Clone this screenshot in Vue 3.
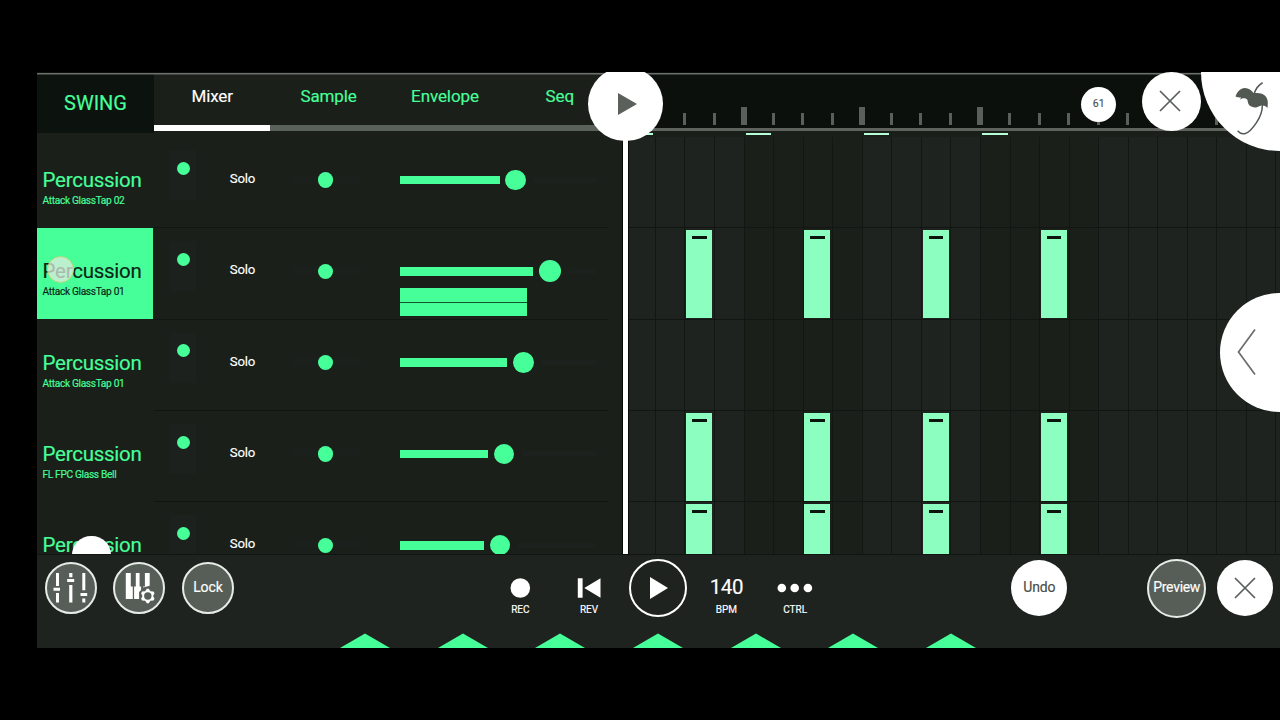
<script setup>
const tabs = ["Mixer", "Sample", "Envelope", "Seq"];

const tracks = [
  { name: "Percussion", sample: "Attack GlassTap 02", level: 100, knob: 20.6, hits: false },
  { name: "Percussion", sample: "Attack GlassTap 01", level: 133.6, knob: 22, hits: true, selected: true },
  { name: "Percussion", sample: "Attack GlassTap 01", level: 107.6, knob: 20.8, hits: false },
  { name: "Percussion", sample: "FL FPC Glass Bell", level: 88.8, knob: 20, hits: true },
  { name: "Percussion", sample: "", level: 84.6, knob: 20, hits: true },
];

const steps = Array.from({ length: 23 }, (_, i) => i);

function isDark(i) {
  return (i >= 4 && i < 8) || (i >= 12 && i < 16);
}

function hasNote(track, i) {
  return track.hits && i % 4 === 2 && i < 16;
}
</script>

<template>
  <div class="stage">
    <div class="screen">
      <header class="top">
        <div class="swing">SWING</div>
        <nav class="tabs">
          <div v-for="(tab, i) in tabs" :key="tab" class="tab" :class="{ active: i === 0 }">{{ tab }}</div>
        </nav>
        <div class="ruler">
          <div v-for="i in steps" :key="i" class="tick">
            <span v-if="i > 1" :class="{ major: i % 4 === 0 && i < 16 }"></span>
          </div>
        </div>
      </header>

      <main class="tracks">
        <div class="marks">
          <div v-for="i in steps" :key="i" class="mark" :class="{ on: i % 4 === 0 && i < 16 }"></div>
        </div>
        <section v-for="(track, t) in tracks" :key="t" class="track">
          <div class="name" :class="{ selected: track.selected }">
            <h2>{{ track.name }}</h2>
            <p v-if="track.sample">{{ track.sample }}</p>
          </div>
          <div class="controls">
            <div class="mute"><i></i></div>
            <div class="solo">Solo</div>
            <div class="pan"><i></i></div>
            <div class="volume">
              <div class="slider">
                <div class="bar" :style="{ width: track.level + 'px' }"></div>
                <div class="knob" :style="{ width: track.knob + 'px', height: track.knob + 'px' }"></div>
                <div class="rest"></div>
              </div>
              <div v-if="track.selected" class="meter">
                <div></div>
                <div></div>
              </div>
            </div>
          </div>
          <div class="pattern">
            <div v-for="i in steps" :key="i" class="step" :class="{ dark: isDark(i) }">
              <div v-if="hasNote(track, i)" class="note"><b></b></div>
            </div>
          </div>
        </section>
        <div class="handle"></div>
      </main>

      <footer class="bottom">
        <div class="tools">
          <div class="slot">
            <div class="round grey">
              <svg width="52" height="52" viewBox="0 0 52 52" fill="#fff">
                <path d="M11 11h3v13h-3zM8.500 25.700h6.500v3H8.500zM11 31h3v9.500h-3zM24.200 11h3.200v4.300h-3.200zM22.200 17h7v3h-7zM24.200 23h3.200v17.500h-3.200zM37.300 11h3v17.300h-3zM35.500 31h6.700v3h-6.700zM37.300 36.500h3v4h-3z" />
              </svg>
            </div>
          </div>
          <div class="slot">
            <div class="round grey">
              <svg width="52" height="52" viewBox="0 0 52 52" fill="#fff">
                <path d="M12.800 11h5v13.500h2V37h-7zM22.800 11h3.800v13.500h1.500v3.400l-2 2V37h-5V24.500h1.700zM31.900 11h4.800v12.800l-6.600 1.700v-1h1.800z" />
                <g transform="translate(34.800 34)">
                  <path d="M-1-7.200h2L2.600-4.700 5.700-4.500 6.700-2.700 5.300 0 6.700 2.700 5.700 4.500 2.600 4.700 1 7.200h-2L-2.600 4.700-5.700 4.500-6.700 2.700-5.300 0-6.700-2.700-5.700-4.500-2.600-4.700z" />
                  <circle r="3.700" fill="#565e57" />
                </g>
              </svg>
            </div>
          </div>
          <div class="slot"><div class="round grey">Lock</div></div>
        </div>

        <div class="transport">
          <div class="slot">
            <svg width="24" height="24"><circle cx="12.300" cy="12" r="9.800" fill="#fff" /></svg>
            <span>REC</span>
          </div>
          <div class="slot">
            <svg width="24" height="24"><path d="M.8 2.300h4.800v19.500H.8zM23.500 2.300v19.400L7.300 12z" fill="#fff" /></svg>
            <span>REV</span>
          </div>
          <div class="slot">
            <div class="play">
              <svg width="20" height="22"><path d="M1 0v22l18-11z" fill="#fff" /></svg>
            </div>
          </div>
          <div class="slot">
            <strong>140</strong>
            <span>BPM</span>
          </div>
          <div class="slot">
            <svg width="36" height="24" fill="#fff">
              <circle cx="4.800" cy="12" r="4.300" />
              <circle cx="17.700" cy="12" r="4.300" />
              <circle cx="30.900" cy="12" r="4.300" />
            </svg>
            <span>CTRL</span>
          </div>
        </div>

        <div class="actions">
          <div class="slot"><div class="round white">Undo</div></div>
          <div class="slot preview"><div class="round grey big">Preview</div></div>
          <div class="slot">
            <div class="round white">
              <svg class="cross" width="22" height="22"><path d="M1 1l20 20M21 1L1 21" /></svg>
            </div>
          </div>
        </div>

        <div class="arrows">
          <svg v-for="n in 7" :key="n" width="50" height="15"><path d="M0 15L25 .5l25 14.500z" fill="#47ff99" /></svg>
        </div>
      </footer>

      <div class="playhead"></div>
      <div class="bubble playknob">
        <svg width="20" height="22"><path d="M0 0v22l19-11z" fill="#5c605d" /></svg>
      </div>
      <div class="bubble position">61</div>
      <div class="bubble close">
        <svg class="cross" width="22" height="22"><path d="M1 1l20 20M21 1L1 21" /></svg>
      </div>
      <div class="bubble logo">
        <svg width="34" height="54" viewBox="0 0 34 54">
          <path fill="#525953" d="M.5 14.500C2 10 5.500 6 9.800 6c4 0 6.700 2.200 9 5.300 3.500-.9 8-.3 10.700 1.900 4 3.300 3.500 8 3 12.700-2-2.400-4.800-3-7.500-2-2.300 1.200-4.800 2.100-7.300 1.200-3-1-4.500-2.500-4.800-4.800-.1-2.200-.9-3.800-3.100-4-2.300-.3-3.800.3-4.600 1.500.1-1 .4-1.600 1-2.200-2-.3-4-.2-5.700-1.100z" />
          <path fill="none" stroke="#525953" stroke-width="1.500" stroke-linecap="round" d="M27.200 1c-4.200 2.400-6.400 6-8 10.500M27.300 23.500c.2 6-2.500 12-6 17.300-3.200 4.800-6.300 9.200-11 10.700-3 .9-5.500-.3-7.200-2.300" />
        </svg>
      </div>
      <div class="bubble drawer">
        <svg width="20" height="48"><path d="M18 1.500L1.500 24 18 46.500" fill="none" stroke="#6a6d6a" stroke-width="1.700" /></svg>
      </div>
      <div class="touch"></div>
    </div>
  </div>
</template>

<style>
body {
  background: #000;
  margin: 0;
}
</style>

<style scoped>
* {
  box-sizing: border-box;
}

.stage {
  -webkit-text-stroke: .15px currentColor;
  background: #000;
  color: #fff;
  font-family: Roboto, "Liberation Sans", sans-serif;
  height: 720px;
  overflow: hidden;
  padding: 72px 0 0 37px;
  width: 1280px;
}

.screen {
  background: #1a1f1a;
  display: flex;
  flex-direction: column;
  height: 576px;
  overflow: hidden;
  position: relative;
}

.top {
  border-top: 1px solid #0b100c;
  box-shadow: inset 0 1.5px #6c6f6c;
  display: flex;
  flex: none;
  height: 61px;
}

.swing {
  align-items: center;
  background: #0c120d;
  box-shadow: inset 0 1.5px #6c6f6c;
  color: #47ff99;
  display: flex;
  flex: none;
  font-size: 20px;
  justify-content: center;
  padding-bottom: 1px;
  width: 117px;
}

.tabs {
  display: flex;
  flex: none;
  height: 58px;
  overflow: hidden;
  width: 471.4px;
}

.tab {
  border-bottom: 6px solid #5a605a;
  color: #47ff99;
  flex: 0 0 116.4px;
  font-size: 17px;
  letter-spacing: -.1px;
  line-height: 20px;
  padding-top: 13px;
  text-align: center;
}

.tab:last-child {
  flex: 1;
  padding-right: 9px;
}

.tab.active {
  border-color: #fff;
  color: #fff;
}

.ruler {
  background: #0b100c;
  border-bottom: 3px solid #5e635e;
  box-shadow: inset 0 1.5px #6c6f6c;
  display: flex;
  flex: 1;
  height: 58px;
  overflow: hidden;
}

.tick {
  align-items: flex-end;
  display: flex;
  flex: 0 0 29.55px;
  padding-bottom: 3px;
}

.tick span {
  background: #5a5f5a;
  height: 12px;
  margin-left: -1.5px;
  width: 3px;
}

.tick span.major {
  height: 18px;
  margin-left: -2.7px;
  width: 6px;
}

.tracks {
  border-bottom: 1px solid #111511;
  flex: none;
  height: 422px;
  overflow: hidden;
  position: relative;
}

.marks {
  display: flex;
  height: 4px;
  overflow: hidden;
  padding-left: 588.4px;
}

.mark {
  flex: 0 0 29.55px;
}

.mark.on::before {
  background: #b4ffd8;
  content: "";
  display: block;
  height: 2px;
  margin-left: 2px;
  width: 25.6px;
}

.track {
  display: flex;
  height: 91.33px;
}

.name {
  color: #47ff99;
  flex: none;
  height: 91px;
  padding: 30px 0 0 5.5px;
  width: 116.5px;
}

.name h2 {
  font-size: 20.5px;
  font-weight: 400;
  letter-spacing: -.25px;
  line-height: 26px;
  margin: 0;
}

.name p {
  font-size: 10.2px;
  letter-spacing: -.34px;
  line-height: 14px;
  margin: 1px 0 0;
  white-space: nowrap;
}

.name.selected {
  background: #47ff99;
  color: #0c2416;
  width: 116px;
}

.selected + .controls {
  margin-left: .5px;
}

.controls {
  border-bottom: 1px solid #121612;
  display: flex;
  flex: none;
  margin-right: 17px;
  padding-left: 16.5px;
  width: 454.9px;
}

.mute {
  background: linear-gradient(#1c211e, #1c211e) no-repeat 0 13px / 26px 50px;
  flex: 0 0 26px;
  padding: 24.7px 0 0 6.5px;
}

.mute i {
  background: #47ff99;
  border-radius: 50%;
  display: block;
  height: 13px;
  width: 13px;
}

.solo {
  flex: 0 0 92px;
  font-size: 13.2px;
  letter-spacing: -.2px;
  line-height: 18px;
  padding: 33px 0 0 1px;
  text-align: center;
}

.pan {
  background: linear-gradient(#1b201c, #1b201c) no-repeat center 38px / 66px 8px;
  flex: 0 0 75px;
  padding: 35.3px 0 0 29.6px;
}

.pan i {
  background: #47ff99;
  border-radius: 50%;
  display: block;
  height: 15.4px;
  width: 15.4px;
}

.volume {
  padding: 31.5px 0 0 36.5px;
}

.slider {
  align-items: center;
  display: flex;
  height: 23px;
  width: 196px;
}

.bar {
  background: #47ff99;
  flex: none;
  height: 8.4px;
}

.knob {
  background: #47ff99;
  border-radius: 50%;
  flex: none;
  margin-left: 5.7px;
}

.rest {
  background: #1c211d;
  flex: 1;
  height: 5px;
  margin-left: 8px;
}

.meter {
  background: #15522f;
  display: flex;
  flex-direction: column;
  gap: 1px;
  margin: 5.5px 0 0;
  width: 127.2px;
}

.meter div {
  background: #47ff99;
  height: 13.5px;
}

.pattern {
  display: flex;
  flex: 1;
  overflow: hidden;
}

.step {
  background: #1f231f;
  border-bottom: 1px solid #121612;
  border-left: 1px solid #131713;
  flex: 0 0 29.55px;
  padding: 2px 0 0 .7px;
}

.step.dark {
  background: #1a1f19;
}

.note {
  background: #8cffc0;
  height: 88px;
  padding: 6px;
  width: 26px;
}

.note b {
  background: #0c140e;
  display: block;
  height: 3px;
  width: 14.5px;
}

/* round grip that peeks out from under the transport bar */
.handle {
  background: #fff;
  border-radius: 50%;
  height: 38.6px;
  left: 35.2px;
  position: absolute;
  top: 402.5px;
  width: 38.6px;
}

.bottom {
  background: #1f231f;
  flex: 1;
  display: grid;
  grid-template-columns: 449px 1fr auto;
  grid-template-rows: 66px 1fr;
  position: relative;
}

.tools,
.transport,
.actions {
  display: flex;
}

.slot {
  align-items: center;
  display: flex;
  flex: 0 0 68.7px;
  flex-direction: column;
  height: 66px;
  justify-content: center;
}

.round {
  align-items: center;
  border-radius: 50%;
  display: flex;
  flex: none;
  font-size: 14px;
  height: 56px;
  justify-content: center;
  letter-spacing: -.15px;
  padding-bottom: 3px;
  width: 56px;
}

.round svg {
  flex: none;
  margin-bottom: -3px;
}

.round.grey {
  background: #565e57;
  border: 2px solid #e6ede7;
  height: 52px;
  width: 52px;
}

.round.big {
  height: 59px;
  letter-spacing: -.3px;
  width: 59px;
}

.round.white {
  background: #fff;
  color: #484d49;
}

.cross {
  fill: none;
  stroke: #5a5e5b;
  stroke-width: 1.7px;
}

.tools {
  margin-left: -.8px;
}

.actions {
  margin-right: .3px;
}

.transport .slot {
  justify-content: flex-start;
  padding-top: 21px;
}

.transport span {
  font-size: 10px;
  line-height: 12px;
  margin-top: 4px;
}

.transport strong {
  font-size: 20.5px;
  font-weight: 400;
  height: 24px;
  letter-spacing: -.4px;
  line-height: 23px;
}

.transport .slot:nth-child(3) {
  justify-content: center;
  padding-top: 0;
}

.play {
  align-items: center;
  border: 2px solid #fff;
  border-radius: 50%;
  display: flex;
  height: 58px;
  justify-content: center;
  padding-left: 3px;
  width: 58px;
}

.preview {
  margin-left: 68.7px;
}

.arrows {
  align-items: flex-end;
  display: flex;
  gap: 47.6px;
  grid-column: 1 / -1;
  padding-left: 303.3px;
}

.arrows svg {
  flex: none;
}

.playhead {
  background: #fff;
  box-shadow: 0 0 0 1px #080b08;
  height: 421px;
  left: 586px;
  position: absolute;
  top: 61px;
  width: 5px;
}

.bubble {
  align-items: center;
  background: #fff;
  border-radius: 50%;
  color: #4c514d;
  display: flex;
  justify-content: center;
  position: absolute;
}

.playknob {
  height: 74.6px;
  left: 551.3px;
  padding-left: 4px;
  top: -5.5px;
  width: 74.6px;
}

.position {
  font-size: 10.5px;
  height: 35.4px;
  left: 1044px;
  padding-bottom: 2px;
  top: 14.5px;
  width: 35.4px;
}

.close {
  height: 59px;
  left: 1105px;
  padding-right: 2.5px;
  top: -.5px;
  width: 59px;
}

.logo {
  height: 158px;
  left: 1164px;
  padding: 74px 57px 0 0;
  top: -79px;
  width: 158px;
}

.drawer {
  height: 119px;
  justify-content: flex-start;
  left: 1183.4px;
  padding: 0 0 1px 17px;
  top: 220.5px;
  width: 119px;
}

.touch {
  background: rgba(225, 235, 225, .75);
  border: 1px solid #b8d674;
  border-radius: 50%;
  height: 27px;
  left: 10px;
  position: absolute;
  top: 184px;
  width: 27px;
}
</style>
